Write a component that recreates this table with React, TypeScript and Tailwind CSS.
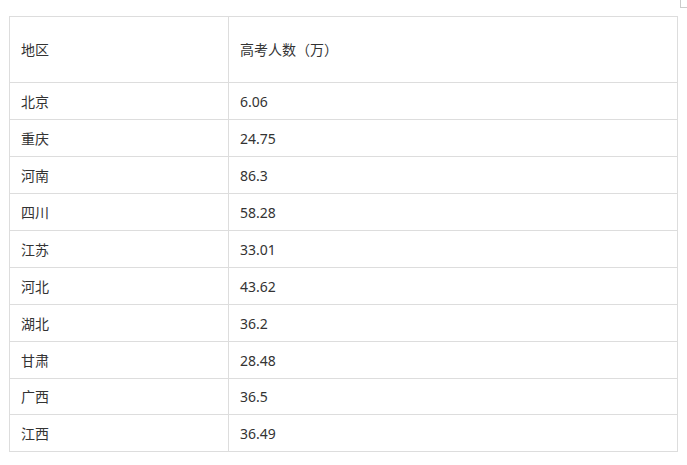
import React from "react";

// Gaokao candidate counts by province
const rows: { region: string; count: string }[] = [
  { region: "北京", count: "6.06" },
  { region: "重庆", count: "24.75" },
  { region: "河南", count: "86.3" },
  { region: "四川", count: "58.28" },
  { region: "江苏", count: "33.01" },
  { region: "河北", count: "43.62" },
  { region: "湖北", count: "36.2" },
  { region: "甘肃", count: "28.48" },
  { region: "广西", count: "36.5" },
  { region: "江西", count: "36.49" },
];

export default function App() {
  return (
    <div
      className="relative min-h-[465px] w-[687px] bg-white pl-[9px] pt-[16px] text-[14px] text-[#333]"
      style={{ fontFamily: '"Noto Sans", "Noto Sans CJK SC", sans-serif' }}
    >
      {/* little corner mark at the top right */}
      <div className="absolute right-0 top-0 h-[8px] w-[7px] border-b border-l border-[#ccc]" />

      <div className="w-[669px] border border-[#ddd]">
        <div className="grid h-[66px] grid-cols-[219px_1fr] border-b border-[#ddd]">
          <div className="flex items-center border-r border-[#ddd] pl-[11px]">地区</div>
          <div className="flex items-center pl-[11px]">高考人数（万）</div>
        </div>
        {rows.map((row, i) => (
          <div
            key={row.region}
            className={`grid grid-cols-[219px_1fr] ${i < 8 ? "h-[37px]" : "h-[36px]"} ${
              i < rows.length - 1 ? "border-b border-[#ddd]" : ""
            }`}
          >
            <div className="flex items-center border-r border-[#ddd] pl-[11px]">{row.region}</div>
            <div className="flex items-center pl-[11px]">{row.count}</div>
          </div>
        ))}
      </div>
    </div>
  );
}
